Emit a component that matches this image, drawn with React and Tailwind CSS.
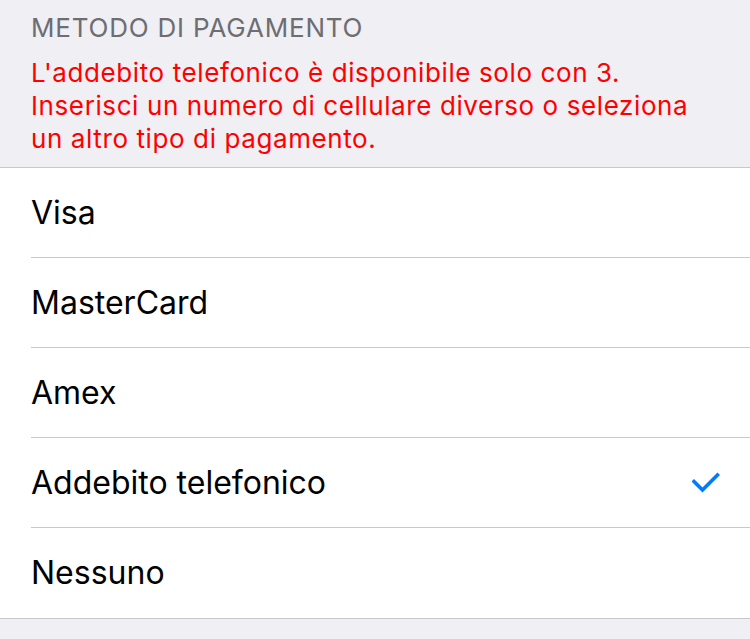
const options = [
  { label: 'Visa' },
  { label: 'MasterCard' },
  { label: 'Amex' },
  { label: 'Addebito telefonico', selected: true },
  { label: 'Nessuno' },
];

const Check = () => (
  <svg width="28" height="22" viewBox="0 0 28 22" fill="none">
    <path d="M2 9.5 L10.5 18 L25.5 3" stroke="#007aff" strokeWidth="3.6" strokeLinecap="square" strokeLinejoin="miter" />
  </svg>
);

const App = () => {
  return (
    <div className="min-h-[639px] bg-[#efeff4] font-['Inter',sans-serif]">
      <div className="px-[31px] pt-[12px] pb-[12px]">
        <div className="text-[26px] leading-[32px] tracking-[0.8px] text-[#6d6d72]">METODO DI PAGAMENTO</div>
        <div className="mt-[12px] text-[26px] leading-[33px] tracking-[0.6px] text-[#ff0000]">
          L'addebito telefonico è disponibile solo con 3.
          <br />
          Inserisci un numero di cellulare diverso o seleziona
          <br />
          un altro tipo di pagamento.
        </div>
      </div>
      <div className="border-y border-[#c8c7cc] bg-white">
        {options.map((o, idx) => (
          <div key={idx} className="pl-[31px]">
            <div
              className={
                'flex h-[90px] items-center justify-between pr-[30px] ' +
                (idx < options.length - 1 ? 'border-b border-[#c8c7cc]' : '')
              }
            >
              <span className="text-[32px] text-black">{o.label}</span>
              {o.selected ? <Check /> : null}
            </div>
          </div>
        ))}
      </div>
    </div>
  );
};

export default App;
